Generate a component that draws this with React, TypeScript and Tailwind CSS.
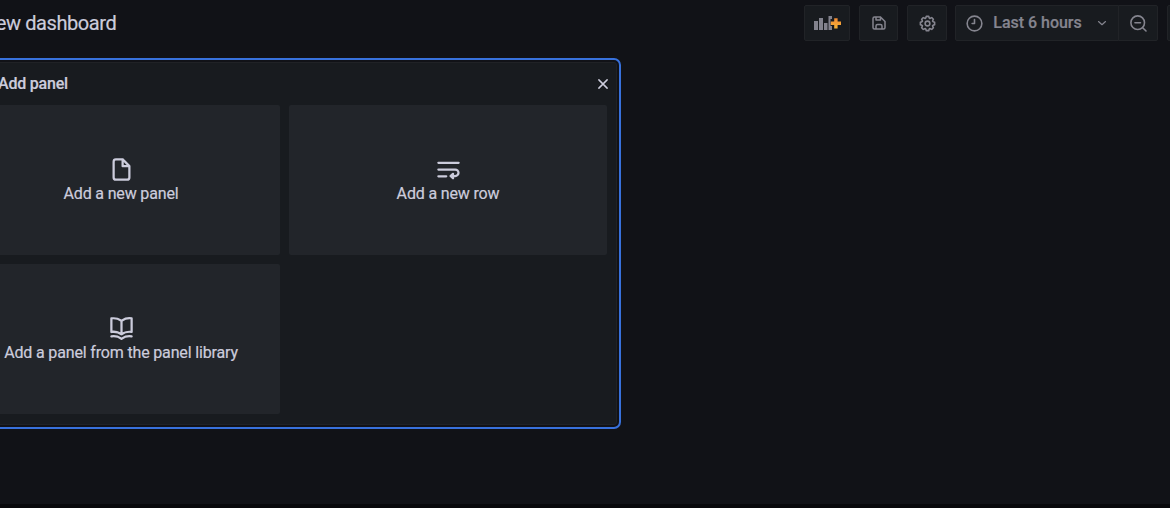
import type { ReactNode } from "react";

const paths = {
  file: "M20,8.94a1.31,1.31,0,0,0-.06-.27l0-.09a1.07,1.07,0,0,0-.19-.28h0l-6-6h0a1.07,1.07,0,0,0-.28-.19.32.32,0,0,0-.09,0A.88.88,0,0,0,13.05,2H7A3,3,0,0,0,4,5V19a3,3,0,0,0,3,3H17a3,3,0,0,0,3-3V9S20,9,20,8.94ZM14,5.41,16.59,8H14ZM18,19a1,1,0,0,1-1,1H7a1,1,0,0,1-1-1V5A1,1,0,0,1,7,4h5V9a1,1,0,0,0,1,1h5Z",
  book: "M21.17,2.06A13.1,13.1,0,0,0,19,1.87a12.94,12.94,0,0,0-7,2.05,12.94,12.94,0,0,0-7-2,13.1,13.1,0,0,0-2.17.19,1,1,0,0,0-.83,1v12a1,1,0,0,0,1.17,1,10.9,10.9,0,0,1,8.25,1.91l.12.07.11,0a.91.91,0,0,0,.7,0l.11,0,.12-.07A10.9,10.9,0,0,1,20.83,16,1,1,0,0,0,22,15V3A1,1,0,0,0,21.17,2.06ZM11,15.35a12.87,12.87,0,0,0-6-1.48c-.33,0-.66,0-1,0v-10a8.69,8.69,0,0,1,1,0,10.86,10.86,0,0,1,6,1.8Zm9-1.44c-.34,0-.67,0-1,0a12.87,12.87,0,0,0-6,1.48V5.67a10.86,10.86,0,0,1,6-1.8,8.69,8.69,0,0,1,1,0Zm1.17,4.15A13.1,13.1,0,0,0,19,17.87a12.94,12.94,0,0,0-7,2.05,12.94,12.94,0,0,0-7-2.05,13.1,13.1,0,0,0-2.17.19A1,1,0,0,0,2,19.21a1,1,0,0,0,1.17.79,10.9,10.9,0,0,1,8.25,1.91,1,1,0,0,0,1.16,0A10.9,10.9,0,0,1,20.83,20,1,1,0,0,0,22,19.21,1,1,0,0,0,21.17,18.06Z",
  save: "m20.71 9.29-6-6a1 1 0 0 0-.32-.21A1.09 1.09 0 0 0 14 3H6a3 3 0 0 0-3 3v12a3 3 0 0 0 3 3h12a3 3 0 0 0 3-3v-8a1 1 0 0 0-.29-.71ZM9 5h4v2H9Zm6 14H9v-3a1 1 0 0 1 1-1h4a1 1 0 0 1 1 1Zm4-1a1 1 0 0 1-1 1h-1v-3a3 3 0 0 0-3-3h-4a3 3 0 0 0-3 3v3H6a1 1 0 0 1-1-1V6a1 1 0 0 1 1-1h1v3a1 1 0 0 0 1 1h6a1 1 0 0 0 1-1V6.41l4 4Z",
  cog: "M21.32,9.55l-1.89-.63.89-1.78A1,1,0,0,0,20.13,6L18,3.87a1,1,0,0,0-1.15-.19l-1.78.89-.63-1.89A1,1,0,0,0,13.5,2h-3a1,1,0,0,0-.95.68L8.92,4.57,7.14,3.68A1,1,0,0,0,6,3.87L3.87,6a1,1,0,0,0-.19,1.15l.89,1.78-1.89.63A1,1,0,0,0,2,10.5v3a1,1,0,0,0,.68.95l1.89.63-.89,1.78A1,1,0,0,0,3.87,18L6,20.13a1,1,0,0,0,1.15.19l1.78-.89.63,1.89a1,1,0,0,0,.95.68h3a1,1,0,0,0,.95-.68l.63-1.89,1.78.89A1,1,0,0,0,18,20.13L20.13,18a1,1,0,0,0,.19-1.15l-.89-1.78,1.89-.63A1,1,0,0,0,22,13.5v-3A1,1,0,0,0,21.32,9.55ZM20,12.78l-1.2.4A2,2,0,0,0,17.64,16l.57,1.14-1.1,1.1L16,17.64a2,2,0,0,0-2.79,1.16l-.4,1.2H11.22l-.4-1.2A2,2,0,0,0,8,17.64l-1.14.57-1.1-1.1L6.36,16A2,2,0,0,0,5.2,13.18L4,12.78V11.22l1.2-.4A2,2,0,0,0,6.36,8L5.79,6.89l1.1-1.1L8,6.36A2,2,0,0,0,10.82,5.2l.4-1.2h1.56l.4,1.2A2,2,0,0,0,16,6.36l1.14-.57,1.1,1.1L17.64,8a2,2,0,0,0,1.16,2.79l1.2.4ZM12,8a4,4,0,1,0,4,4A4,4,0,0,0,12,8Zm0,6a2,2,0,1,1,2-2A2,2,0,0,1,12,14Z",
};

function Filled({ d, className }: { d: string; className: string }) {
  return (
    <svg viewBox="0 0 24 24" fill="currentColor" className={className}>
      <path d={d} />
    </svg>
  );
}

function Stroked({ children, className }: { children: ReactNode; className: string }) {
  return (
    <svg
      viewBox="0 0 24 24"
      fill="none"
      stroke="currentColor"
      strokeWidth="2"
      strokeLinecap="round"
      strokeLinejoin="round"
      className={className}
    >
      {children}
    </svg>
  );
}

function AddPanelIcon() {
  return (
    <svg viewBox="0 0 27 16" className="h-4 w-[27px]">
      <g fill="#82828d">
        <path d="M0 6h4v9H0zM5 3h4v12H5zM10 8h3.5v7H10zM14.5 1H18v3h-1.5v7H18v4h-3.5z" />
      </g>
      <path
        d="M20.2 3.2h3.4v3.4H27v3.4h-3.4v3.4h-3.4V10h-3.4V6.6h3.4z"
        fill="url(#plusFill)"
      />
      <defs>
        <linearGradient id="plusFill" x1="0" y1="0" x2="0" y2="1">
          <stop offset="0" stopColor="#f28b35" />
          <stop offset="1" stopColor="#f5b338" />
        </linearGradient>
      </defs>
    </svg>
  );
}

function ToolButton({ children, className }: { children?: ReactNode; className: string }) {
  return (
    <button
      className={`flex h-9 shrink-0 items-center justify-center border border-[#212327] bg-[#181b1f] text-[#85858f] ${className}`}
    >
      {children}
    </button>
  );
}

function Card({ icon, label }: { icon: ReactNode; label: string }) {
  return (
    <button className="flex h-[150px] flex-col items-center justify-center rounded-xs bg-[#22252a]">
      {icon}
      <span className="text-[16px] leading-[22px] tracking-[-0.16px] whitespace-nowrap [-webkit-text-stroke:0.2px]">
        {label}
      </span>
    </button>
  );
}

export default function App() {
  return (
    <div className="flex h-[508px] w-[1170px] flex-col overflow-hidden border-b-4 border-[#08080b] bg-[#111217] font-['Roboto',sans-serif] text-[#ccccdc]">
      <header className="flex h-[58px] shrink-0 items-start pt-[5px]">
        <h1 className="-ml-[18px] w-[822px] shrink-0 text-[20px] leading-9 font-normal tracking-[-0.42px] whitespace-nowrap [-webkit-text-stroke:0.2px]">
          New dashboard
        </h1>
        <ToolButton className="w-[46px] rounded-xs">
          <AddPanelIcon />
        </ToolButton>
        <ToolButton className="ml-[9px] w-[39px] rounded-xs">
          <Filled d={paths.save} className="size-[18px]" />
        </ToolButton>
        <ToolButton className="ml-[9px] w-10 rounded-xs">
          <Filled d={paths.cog} className="size-[19px]" />
        </ToolButton>
        <ToolButton className="ml-2 w-[164px] rounded-l-xs">
          <Stroked className="size-[19px]">
            <circle cx="12" cy="12" r="9.3" />
            <path d="M12 7v5H9" />
          </Stroked>
          <span className="ml-[9px] text-[16px] leading-6 font-medium tracking-[-0.02px] whitespace-nowrap [-webkit-text-stroke:0.2px]">
            Last 6 hours
          </span>
          <Stroked className="ml-[13px] size-[14px]">
            <path d="m6 9.5 6 5.5 6-5.5" />
          </Stroked>
        </ToolButton>
        <ToolButton className="w-10 -ml-px rounded-r-xs">
          <Stroked className="size-[19px]">
            <circle cx="11" cy="11" r="8.6" />
            <path d="m17.3 17.3 4.2 4.2M7.5 11h7" />
          </Stroked>
        </ToolButton>
        <ToolButton className="ml-[9px] w-10 rounded-xs" />
      </header>

      <main className="-ml-[55px] h-[371px] w-[676px] shrink-0 rounded-[7px] border-2 border-[#3871dc] bg-[#111217] p-[2px]">
        <section className="flex h-full flex-col rounded-[3px] border border-[#202226] bg-[#181b1f] pr-[9px] pl-3">
          <div className="flex h-[42px] shrink-0 items-center justify-between">
            <h2 className="ml-[36px] text-[16px] leading-6 font-medium tracking-[-0.2px] [-webkit-text-stroke:0.2px]">
              Add panel
            </h2>
            <Stroked className="-mr-[5px] size-[18px]">
              <path d="m6.5 6.5 11 11m0-11-11 11" />
            </Stroked>
          </div>
          <div className="grid grid-cols-[318px_318px] gap-[9px]">
            <Card
              icon={<Filled d={paths.file} className="size-[27px]" />}
              label="Add a new panel"
            />
            <Card
              icon={
                <Stroked className="size-[27px]">
                  <path d="M3 6h18M3 12h15a2.8 2.8 0 0 1 0 5.8h-3M3 18h7" />
                  <path d="m16 15.8-2.2 2 2.2 2z" fill="currentColor" />
                </Stroked>
              }
              label="Add a new row"
            />
            <Card
              icon={<Filled d={paths.book} className="size-[27px]" />}
              label="Add a panel from the panel library"
            />
          </div>
        </section>
      </main>
    </div>
  );
}
